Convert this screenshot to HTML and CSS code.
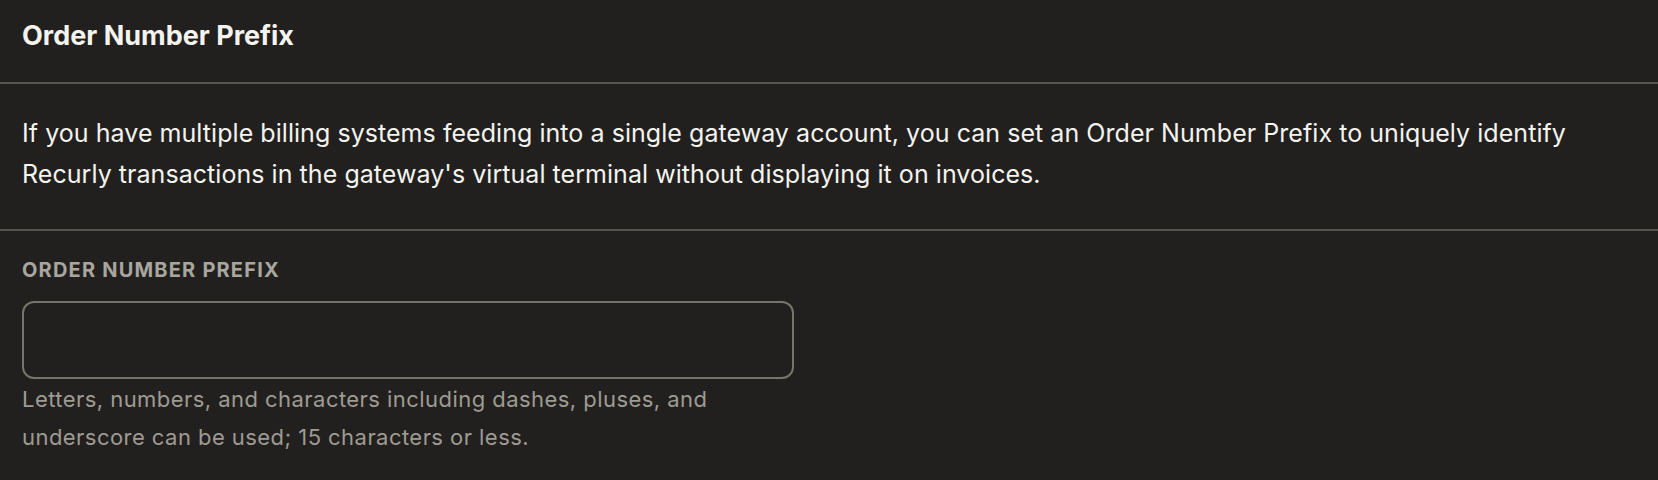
FILE: index.html
```html
<!DOCTYPE html>
<html lang="en">
<head>
<meta charset="utf-8">
<title>Order Number Prefix</title>
<link rel="stylesheet" href="styles.css">
</head>
<body>
<section class="card">
  <header class="card-header">
    <h2 class="card-title">Order Number Prefix</h2>
  </header>
  <div class="card-desc">
    <p>If you have multiple billing systems feeding into a single gateway account, you can set an Order Number Prefix to uniquely identify Recurly transactions in the gateway's virtual terminal without displaying it on invoices.</p>
  </div>
  <div class="card-form">
    <label class="field-label" for="prefix">ORDER NUMBER PREFIX</label>
    <input class="field-input" id="prefix" type="text">
    <p class="field-help">Letters, numbers, and characters including dashes, pluses, and underscore can be used; 15 characters or less.</p>
  </div>
</section>
</body>
</html>
```
FILE: styles.css
```css
html, body {
  margin: 0;
  padding: 0;
  background: #22201e;
}
body {
  font-family: Inter, "Noto Sans", sans-serif;
  color: #f4f3ee;
}
.card-header {
  height: 84px;
  box-sizing: border-box;
  padding: 18px 22px 0;
  border-bottom: 2px solid #57544d;
}
.card-title {
  margin: 0;
  font-size: 27px;
  font-weight: 700;
  line-height: 36px;
}
.card-desc {
  padding: 29px 22px 34px;
  border-bottom: 2px solid #57544d;
}
.card-desc p {
  margin: 0;
  font-size: 25px;
  letter-spacing: 0.05px;
  line-height: 41px;
  max-width: 1580px;
}
.card-form {
  padding: 27px 22px 0;
}
.field-label {
  display: block;
  font-size: 20px;
  font-weight: 700;
  letter-spacing: 1.2px;
  color: #a8a69e;
  line-height: 24px;
}
.field-input {
  display: block;
  box-sizing: border-box;
  margin-top: 19px;
  width: 772px;
  height: 78px;
  background: transparent;
  border: 2px solid #77746c;
  border-radius: 12px;
  color: #f4f3ee;
  font: inherit;
  font-size: 22px;
  padding: 0 16px;
  outline: none;
}
.field-help {
  margin: 1px 0 0;
  max-width: 740px;
  font-size: 22px;
  letter-spacing: 0.45px;
  line-height: 38px;
  color: #9e9b93;
}
```
